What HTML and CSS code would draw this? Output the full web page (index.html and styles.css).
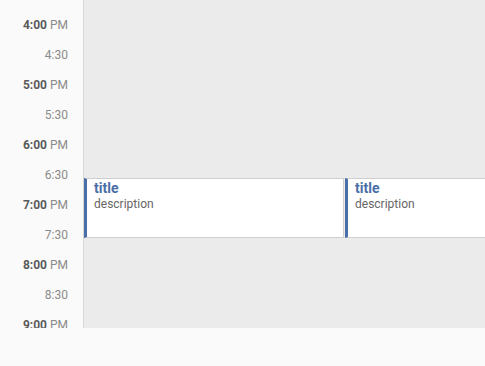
FILE: index.html
```html
<!DOCTYPE html>
<html lang="en">
<head>
    <meta charset="UTF-8">
    <meta name="viewport" content="width=device-width, initial-scale=1.0">
    <title>Day View</title>
    <link rel="stylesheet" href="styles.css">
</head>
<body>
    <div class="calendar">
        <div class="times">
            <div class="time hour"><b>4:00</b> PM</div>
            <div class="time">4:30</div>
            <div class="time hour"><b>5:00</b> PM</div>
            <div class="time">5:30</div>
            <div class="time hour"><b>6:00</b> PM</div>
            <div class="time">6:30</div>
            <div class="time hour"><b>7:00</b> PM</div>
            <div class="time">7:30</div>
            <div class="time hour"><b>8:00</b> PM</div>
            <div class="time">8:30</div>
            <div class="time hour"><b>9:00</b> PM</div>
        </div>
        <div class="grid">
            <div class="events">
                <div class="event">
                    <div class="event-title">title</div>
                    <div class="event-desc">description</div>
                </div>
                <div class="event">
                    <div class="event-title">title</div>
                    <div class="event-desc">description</div>
                </div>
            </div>
        </div>
    </div>
</body>
</html>
```

FILE: styles.css
```css
body, html {
    margin: 0;
    padding: 0;
    font-family: Roboto, "Liberation Sans", sans-serif;
    background-color: #fafafa;
}
.calendar {
    display: flex;
    height: 328px;
}
.times {
    width: 84px;
    flex-shrink: 0;
    padding-top: 10px;
    border-right: 1px solid #d6d6d6;
    box-sizing: border-box;
}
.time {
    height: 30px;
    line-height: 30px;
    font-size: 12px;
    text-align: right;
    padding-right: 15px;
    color: #8a8a8a;
}
.time b {
    color: #5a5a5a;
    font-weight: bold;
}
.grid {
    flex: 1;
    background-color: #ebebeb;
    padding-top: 178px;
    overflow: hidden;
}
.events {
    display: flex;
    gap: 1px;
}
.event {
    flex-shrink: 0;
    width: 260px;
    height: 60px;
    box-sizing: border-box;
    background-color: #fff;
    border: 1px solid #cfcfcf;
    border-left: 3px solid #4a6ea8;
    padding: 1px 7px 0;
}
.event-title {
    font-size: 14px;
    font-weight: bold;
    line-height: 16px;
    color: #4a6ea8;
}
.event-desc {
    font-size: 12px;
    line-height: 16px;
    color: #666;
}
```
